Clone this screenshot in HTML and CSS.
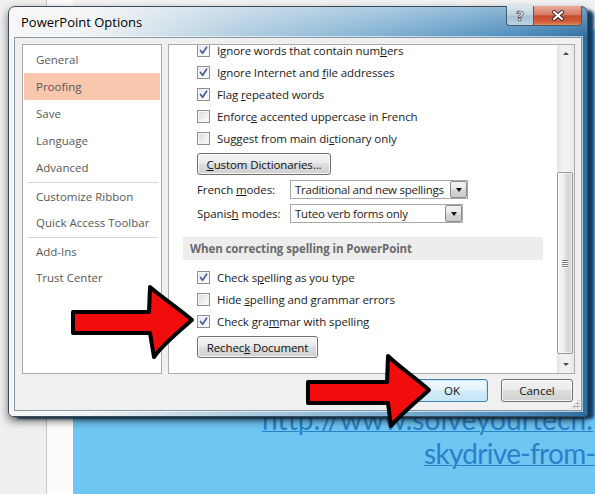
FILE: index.html
```html
<!DOCTYPE html>
<html>
<head>
<meta charset="utf-8">
<title>PowerPoint Options</title>
<link rel="stylesheet" href="styles.css">
</head>
<body>
<div class="desktop">
  <div class="bg-gray"></div>
  <div class="bg-white"></div>
  <div class="bg-slide">
    <div class="slide-top"></div>
    <div class="slide-blue">
      <span class="url url1">http://www.solveyourtech.</span>
      <span class="url url2">skydrive-from-</span>
    </div>
  </div>

  <div class="dialog">
    <div class="titlebar">
      <span class="title">PowerPoint Options</span>
      <div class="caption-btns">
        <div class="cap help"><span class="q">?</span></div>
        <div class="cap close">
          <svg width="14" height="11" viewBox="0 0 14 11">
            <path d="M3 2 L11 9 M11 2 L3 9" stroke="#3a2a2a" stroke-width="4" stroke-linecap="round"/>
            <path d="M3 2 L11 9 M11 2 L3 9" stroke="#ffffff" stroke-width="2.2" stroke-linecap="round"/>
          </svg>
        </div>
      </div>
    </div>
    <div class="client">
      <div class="main">
        <ul class="nav">
          <li>General</li>
          <li class="sel">Proofing</li>
          <li>Save</li>
          <li>Language</li>
          <li>Advanced</li>
          <li class="sep"></li>
          <li class="sm">Customize Ribbon</li>
          <li class="sm">Quick Access Toolbar</li>
          <li class="sep"></li>
          <li class="sm">Add-Ins</li>
          <li class="sm">Trust Center</li>
        </ul>
        <div class="panel">
          <div class="content">
            <div class="row"><span class="cb on"><svg viewBox="0 0 11 11"><path d="M2.5 5.5 L4.6 8.3 L8.6 2.2"/></svg></span><span>Ignore words that contain num<u>b</u>ers</span></div>
            <div class="row"><span class="cb on"><svg viewBox="0 0 11 11"><path d="M2.5 5.5 L4.6 8.3 L8.6 2.2"/></svg></span><span>Ignore Internet and <u>f</u>ile addresses</span></div>
            <div class="row"><span class="cb on"><svg viewBox="0 0 11 11"><path d="M2.5 5.5 L4.6 8.3 L8.6 2.2"/></svg></span><span>Flag <u>r</u>epeated words</span></div>
            <div class="row"><span class="cb"></span><span>Enforc<u>e</u> accented uppercase in French</span></div>
            <div class="row"><span class="cb"></span><span>Suggest from main di<u>c</u>tionary only</span></div>
            <div class="btn btn-custom"><span><u>C</u>ustom Dictionaries...</span></div>
            <div class="mode"><span class="mode-label">French <u>m</u>odes:</span><div class="select sel-fr"><span>Traditional and new spellings</span><span class="dd"><i></i></span></div></div>
            <div class="mode"><span class="mode-label">Spanis<u>h</u> modes:</span><div class="select sel-es"><span>Tuteo verb forms only</span><span class="dd"><i></i></span></div></div>
            <div class="band">When correcting spelling in PowerPoint</div>
            <div class="row first"><span class="cb on"><svg viewBox="0 0 11 11"><path d="M2.5 5.5 L4.6 8.3 L8.6 2.2"/></svg></span><span>Check s<u>p</u>elling as you type</span></div>
            <div class="row"><span class="cb"></span><span>Hide <u>s</u>pelling and grammar errors</span></div>
            <div class="row"><span class="cb on"><svg viewBox="0 0 11 11"><path d="M2.5 5.5 L4.6 8.3 L8.6 2.2"/></svg></span><span>Check gra<u>m</u>mar with spelling</span></div>
            <div class="btn btn-recheck"><span>Rechec<u>k</u> Document</span></div>
          </div>
          <div class="scrollbar">
            <div class="sb-btn"><i class="arr-up"></i></div>
            <div class="track">
              <div class="thumb"><span class="gripper"><i></i><i></i><i></i><i></i></span></div>
            </div>
            <div class="sb-btn"><i class="arr-down"></i></div>
          </div>
        </div>
      </div>
      <div class="footer">
        <div class="btn btn-foot btn-ok">OK</div>
        <div class="btn btn-foot">Cancel</div>
      </div>
      <div class="grip"></div>
    </div>
  </div>

  <svg class="arrows" width="595" height="494" viewBox="0 0 595 494">
    <path d="M73 312 L149 312 L150 287 C160 296 178 308 192 320 C178 332 163 344 154 357 L150 333 L73 333 Z"/>
    <path d="M308 382 L387 382 L388 356 C398 366 416 378 429 390 C416 402 401 414 391 426 L388 403 L308 403 Z"/>
  </svg>
</div>
</body>
</html>
```

FILE: styles.css
```css
* { box-sizing: border-box; }
html, body { margin: 0; padding: 0; }
body {
  width: 595px;
  height: 494px;
  overflow: hidden;
  font-family: "Open Sans", "Noto Sans", "DejaVu Sans", sans-serif;
}
.desktop {
  position: relative;
  width: 595px;
  height: 494px;
  display: flex;
  overflow: hidden;
  background: #fff;
}
.bg-gray { width: 47px; flex: none; background: #efefef; border-right: 1px solid #c6c6c6; }
.bg-white { width: 26px; flex: none; background: #fcfcfc; }
.bg-slide { flex: 1; min-width: 0; display: flex; flex-direction: column; }
.slide-top { height: 30px; flex: none; background: #f2f2f2; }
.slide-blue {
  flex: 1;
  background: #6ec6f3;
  padding-top: 372px;
  overflow: hidden;
}
.url {
  display: block;
  white-space: nowrap;
  font-family: Lato, "Open Sans", sans-serif;
  font-size: 28px;
  line-height: 34px;
  color: #2c80c8;
  text-decoration: underline;
  text-decoration-thickness: 1px;
}
.url1 { padding-left: 189px; letter-spacing: 0.1px; }
.url2 { padding-left: 351px; letter-spacing: -0.7px; }

/* dialog window */
.dialog {
  position: absolute;
  left: 8px;
  top: 6px;
  width: 580px;
  height: 411px;
  border: 1px solid #3e4b58;
  border-radius: 7px 7px 5px 5px;
  padding: 0 5px 5px;
  display: flex;
  flex-direction: column;
  background:
    linear-gradient(to bottom, rgba(255,255,255,0.35), rgba(255,255,255,0) 30px),
    linear-gradient(to right, #f6f6f6 0%, #eff1f3 14%, #b4cfe1 38%, #7fb0d2 65%, #4d8dbd 88%, #2f6f9f 100%);
  box-shadow: 0 4px 8px rgba(0,0,0,0.55), 7px 3px 3px -1px rgba(18,62,105,0.95);
}
.titlebar {
  height: 30px;
  display: flex;
  justify-content: space-between;
  align-items: flex-start;
}
.title {
  font-size: 13px;
  line-height: 30px;
  padding-left: 7px;
  color: #000;
}
.caption-btns { display: flex; margin-top: -1px; }
.cap {
  height: 20px;
  border: 1px solid #4b5a68;
  border-top: none;
  display: flex;
  align-items: center;
  justify-content: center;
}
.help {
  width: 27px;
  border-right: none;
  border-radius: 0 0 0 4px;
  background: linear-gradient(#dde8ef, #bcd1df 48%, #a5c0d3 52%, #b9d3e3);
}
.q {
  font-size: 14px;
  font-weight: bold;
  line-height: 14px;
  color: #eef2f5;
  -webkit-text-stroke: 0.7px #3a4550;
  font-family: "DejaVu Sans", sans-serif;
}
.close {
  width: 49px;
  border-radius: 0 0 4px 0;
  background: linear-gradient(#eaaa9a, #d57c67 45%, #c64b31 52%, #d2603d 85%, #e2905f);
}
.close svg { display: block; }

.client {
  flex: 1;
  background: #f0f0f0;
  border: 1px solid #8797a6;
  box-shadow: 0 0 0 1px rgba(255,255,255,0.6);
  display: flex;
  flex-direction: column;
  padding: 6px 6px 0 7px;
  position: relative;
}
.main { display: flex; gap: 6px; height: 330px; }

.nav {
  width: 140px;
  flex: none;
  border: 1px solid #ababab;
  background: #fff;
  margin: 0;
  padding: 1px 0 0;
  list-style: none;
}
.nav li {
  height: 27px;
  line-height: 27px;
  padding-left: 12px;
  margin: 0 1px;
  color: #585858;
  font-size: 11.5px;
  white-space: nowrap;
}
.nav li.sm { height: 26px; line-height: 26px; }
.nav li.sel { background: #f8c7ad; }
.nav li.sep {
  height: 3px;
  padding: 0;
  margin: 0 3px 0 4px;
  position: relative;
}
.nav li.sep::after {
  content: "";
  position: absolute;
  left: 0; right: 0; top: 1px;
  height: 1px;
  background: #d8d8d8;
}

.panel {
  flex: 1;
  min-width: 0;
  border: 1px solid #ababab;
  background: #fff;
  display: flex;
  overflow: hidden;
}
.content {
  flex: 1;
  min-width: 0;
  margin-top: -6px;
  font-size: 11.5px;
  letter-spacing: -0.1px;
  color: #1b1b1b;
}
.row {
  height: 22px;
  display: flex;
  align-items: center;
  gap: 7px;
  padding-left: 28px;
  white-space: nowrap;
}
.row.first { margin-top: 6px; }
.cb {
  width: 13px;
  height: 13px;
  flex: none;
  border: 1px solid #8e8f8f;
  background: linear-gradient(135deg, #d8d8d8, #f0f0f0 60%, #fcfcfc);
  box-shadow: inset 0 0 0 1px #f6f6f6;
  position: relative;
}
.cb.on { background: linear-gradient(135deg, #e2e4ee, #f5f6fa 60%, #ffffff); }
.cb svg {
  position: absolute;
  left: 0; top: 0;
  width: 11px;
  height: 11px;
}
.cb svg path {
  fill: none;
  stroke: #4a5d9c;
  stroke-width: 1.7;
  stroke-linecap: round;
  stroke-linejoin: round;
}

.btn {
  height: 22px;
  border: 1px solid #707070;
  border-radius: 3px;
  background: linear-gradient(#f3f3f3 0%, #ebebeb 45%, #dddddd 50%, #d0d0d0 100%);
  box-shadow: inset 0 0 0 1px rgba(255,255,255,0.75);
  font-size: 11.5px;
  color: #111;
  display: flex;
  align-items: center;
  justify-content: center;
  white-space: nowrap;
}
.btn-custom { margin: 4px 0 0 28px; width: 134px; }
.btn-recheck { margin: 4px 0 0 28px; width: 121px; }

.mode {
  height: 19px;
  margin-top: 5px;
  display: flex;
  align-items: center;
  padding-left: 28px;
  white-space: nowrap;
}
.mode-label { width: 93px; flex: none; }
.select {
  height: 19px;
  border: 1px solid #a8a8a8;
  background: #fff;
  display: flex;
  align-items: center;
  justify-content: space-between;
  padding-left: 4px;
  overflow: hidden;
}
.select span:first-child { letter-spacing: -0.25px; }
.sel-fr { width: 178px; }
.sel-es { width: 173px; }
.dd {
  width: 17px;
  height: 17px;
  flex: none;
  border: 1px solid #8a8a8a;
  border-radius: 2px;
  background: linear-gradient(#f4f4f4, #e6e6e6 48%, #d6d6d6 52%, #cacaca);
  display: flex;
  align-items: center;
  justify-content: center;
}
.dd i {
  width: 0; height: 0;
  border-left: 3.5px solid transparent;
  border-right: 3.5px solid transparent;
  border-top: 4px solid #111;
}

.band {
  margin: 14px 14px 0;
  height: 23px;
  line-height: 23px;
  background: #ededed;
  color: #6b6b6b;
  font-weight: bold;
  padding-left: 7px;
  white-space: nowrap;
}

.scrollbar {
  width: 17px;
  flex: none;
  background: linear-gradient(to right, #e4e4e4, #f1f1f1 30%, #f1f1f1 70%, #e8e8e8);
  display: flex;
  flex-direction: column;
}
.sb-btn {
  height: 17px;
  display: flex;
  align-items: center;
  justify-content: center;
  flex: none;
}
.arr-up, .arr-down {
  width: 0; height: 0;
  border-left: 3px solid transparent;
  border-right: 3px solid transparent;
}
.arr-up { border-bottom: 3px solid #4a4a4a; }
.arr-down { border-top: 3px solid #4a4a4a; }
.track { flex: 1; }
.thumb {
  margin-top: 110px;
  height: 182px;
  width: 16px;
  border: 1px solid #989898;
  border-radius: 2px;
  background: linear-gradient(to right, #f7f7f7, #ececec 45%, #dcdcdc 55%, #d3d3d3);
  box-shadow: inset 0 0 0 1px rgba(255,255,255,0.6);
  display: flex;
  align-items: center;
  justify-content: center;
}
.gripper { display: flex; flex-direction: column; gap: 1px; }
.gripper i {
  width: 6px;
  height: 1px;
  background: #7c7c7c;
  box-shadow: 0 1px 0 #fafafa;
}

.footer {
  display: flex;
  justify-content: flex-end;
  gap: 13px;
  margin-top: 5px;
  margin-right: 2px;
}
.btn-foot { width: 72px; height: 23px; }
.btn-ok {
  border-color: #3c7fb1;
  background: linear-gradient(#f0f9fe, #e3f3fc 48%, #d2ebf9 52%, #c6e4f6);
  box-shadow: inset 0 0 0 1px #c9e9fb;
}
.grip {
  position: absolute;
  right: 1px;
  bottom: 1px;
  width: 10px;
  height: 10px;
  background-image: radial-gradient(circle, #a0a0a0 0.9px, transparent 1.2px);
  background-size: 3px 3px;
  clip-path: polygon(100% 0, 100% 100%, 0 100%);
}

.arrows {
  position: absolute;
  left: 0;
  top: 0;
  pointer-events: none;
}
.arrows path {
  fill: #f20c0c;
  stroke: #000;
  stroke-width: 4;
  stroke-linejoin: round;
}
```
